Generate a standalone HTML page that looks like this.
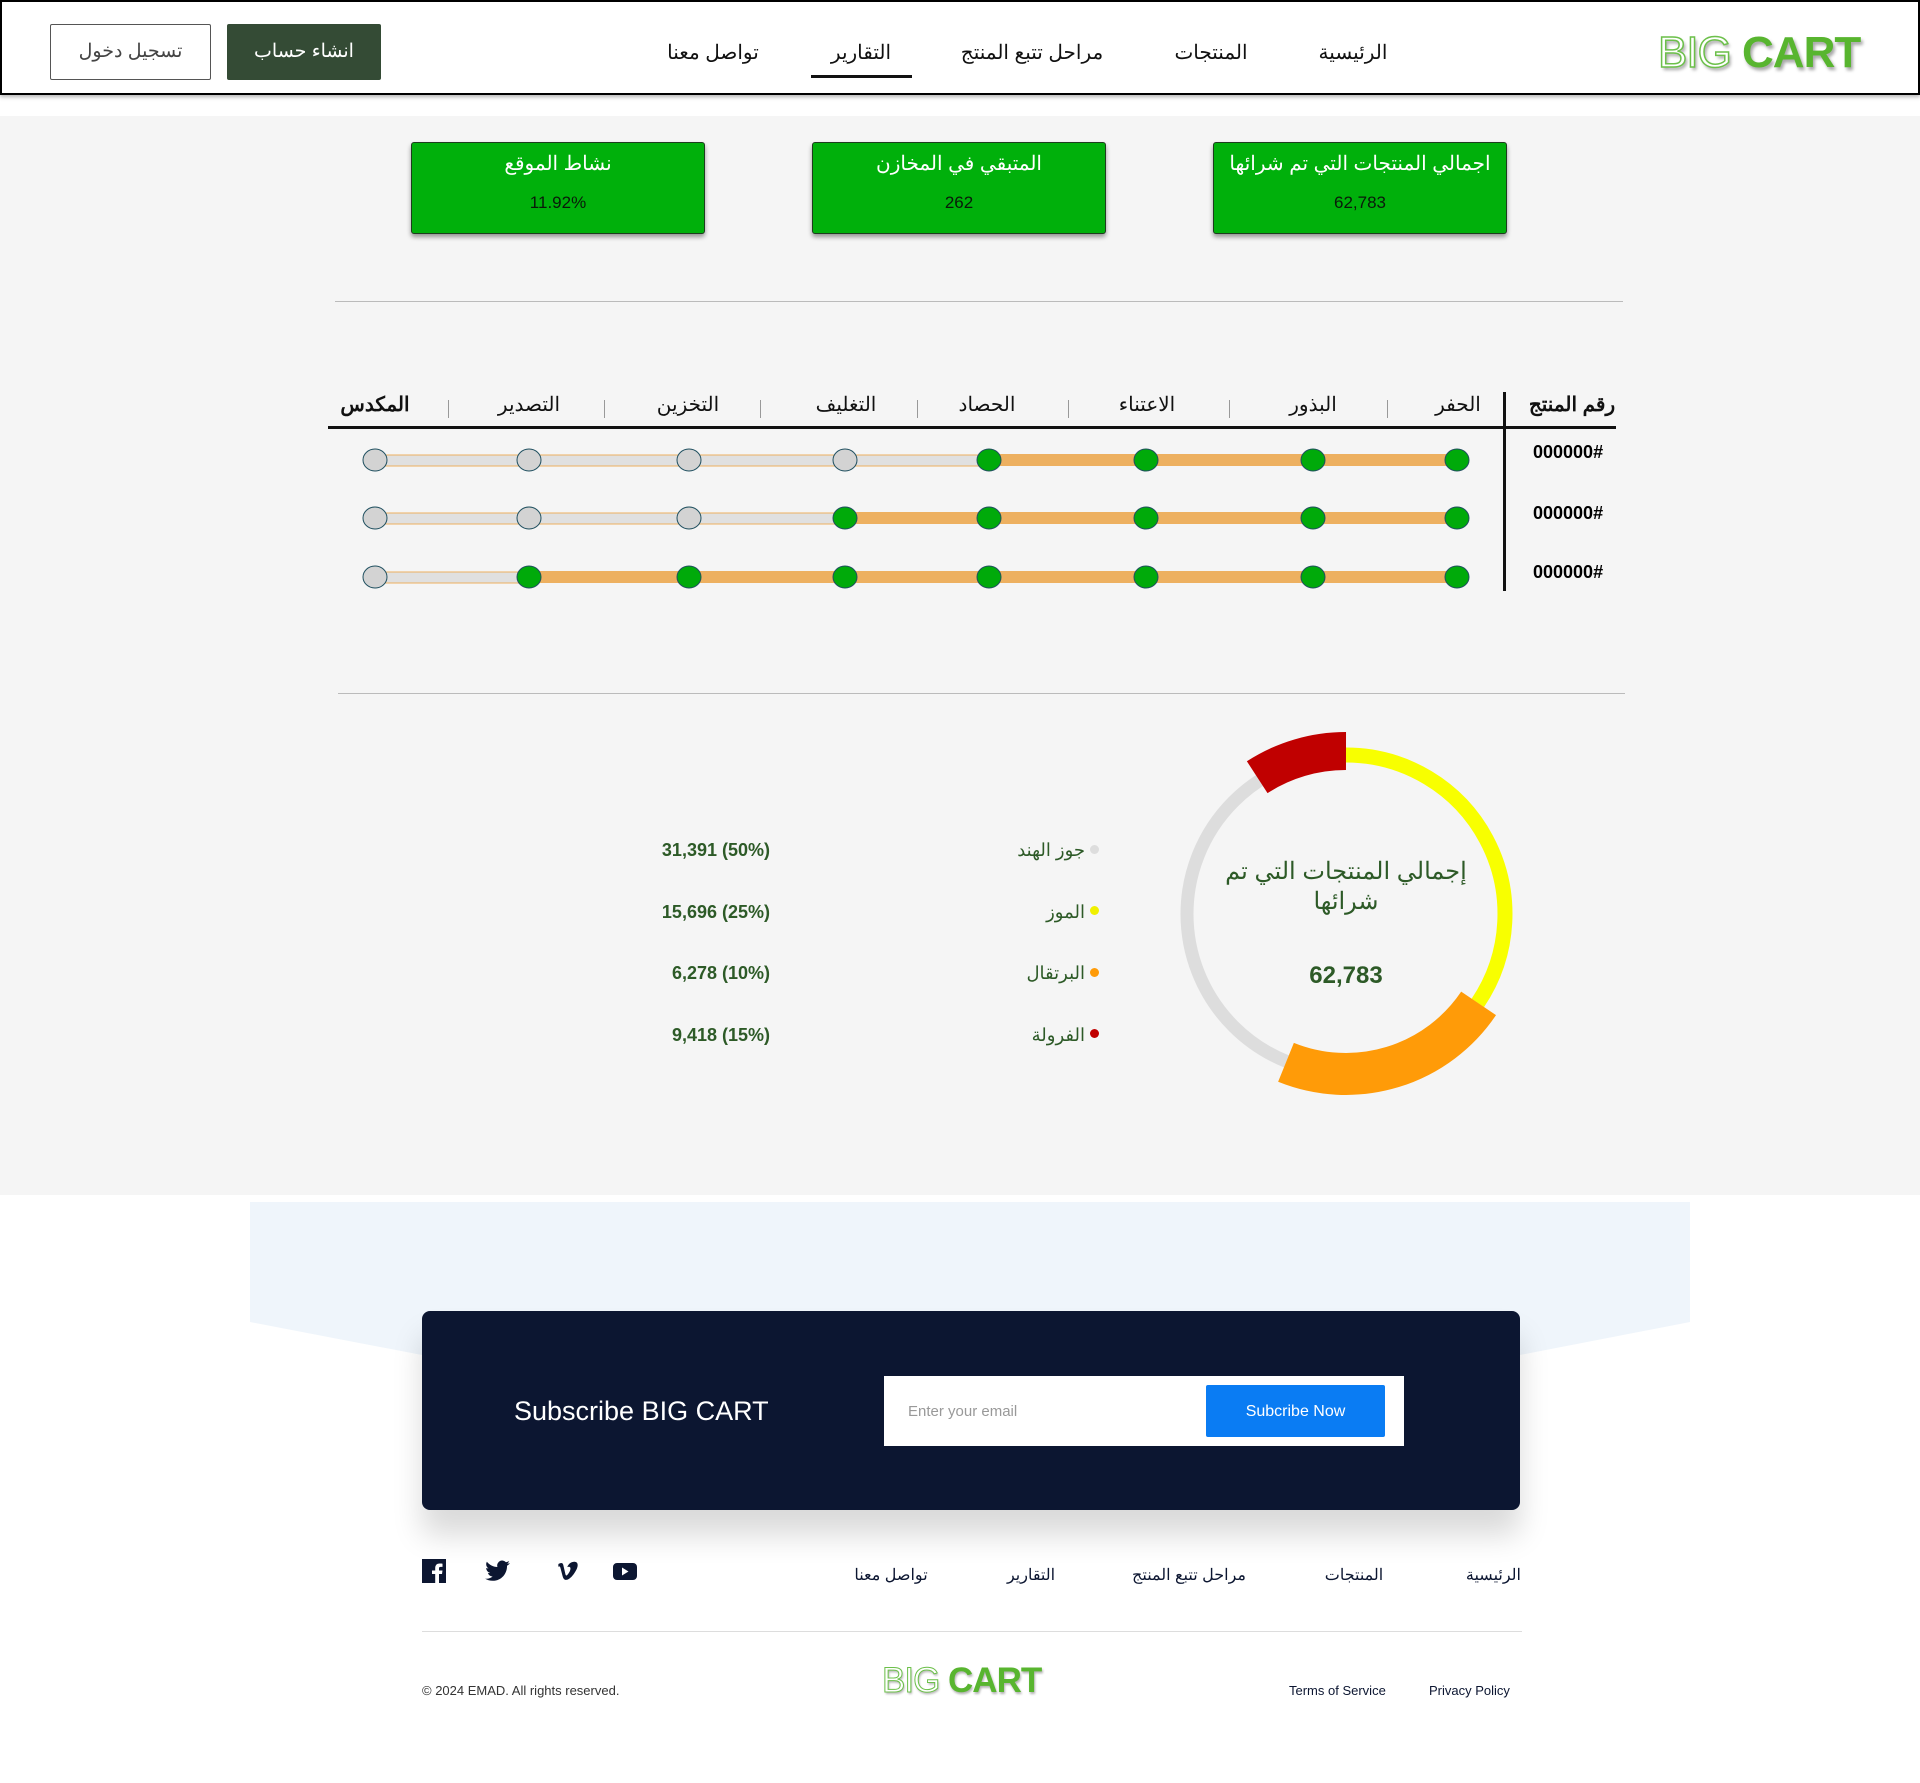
<!DOCTYPE html>
<html><head><meta charset="utf-8"><style>
*{margin:0;padding:0;box-sizing:border-box}
body{width:1920px;height:1783px;position:relative;background:#fff;font-family:"Liberation Sans","Noto Sans CJK SC",sans-serif;overflow:hidden}
.a{position:absolute;white-space:nowrap}
.c{transform:translateX(-50%)}
.nav{font-size:20px;color:#111;top:40px}
.card{position:absolute;top:142px;width:294px;height:92px;background:#00b00b;border:1px solid #1d3d1d;border-radius:3px;box-shadow:0 3px 5px rgba(0,0,0,.4);color:#fff;text-align:center}
.card .t{font-size:20px;margin-top:8px}
.card .v{font-size:17px;margin-top:17px;color:#0a1a0a}
.hd{font-size:20px;color:#111;top:392px;font-weight:bold}
.sep{position:absolute;top:400px;width:1px;height:18px;background:#999}
.lg{font-size:18px;color:#2d5a27}
.vl{font-size:18px;color:#2d5a27;font-weight:bold}
.fl{font-size:16px;color:#0c1631;top:1565px}
</style></head><body>
<div class="a" style="left:0;top:0;width:1920px;height:95px;border:2px solid #000;background:#fff;box-shadow:0 2px 4px rgba(0,0,0,.3)"></div>
<div class="a" style="left:50px;top:24px;width:161px;height:56px;border:1px solid #555;border-radius:2px;text-align:center;line-height:54px;font-size:19px;color:#444">تسجيل دخول</div>
<div class="a" style="left:227px;top:24px;width:154px;height:56px;background:#344b35;border-radius:2px;text-align:center;line-height:56px;font-size:19px;color:#fff">انشاء حساب</div>
<div class="a nav c" style="left:1353px">الرئيسية</div>
<div class="a nav c" style="left:1211px">المنتجات</div>
<div class="a nav c" style="left:1032px">مراحل تتبع المنتج</div>
<div class="a nav c" style="left:861px">التقارير</div>
<div class="a" style="left:811px;top:75px;width:101px;height:3px;background:#111"></div>
<div class="a nav c" style="left:713px">تواصل معنا</div>
<div class="a" style="left:1658px;top:28px;font-size:44px;letter-spacing:-1px;text-shadow:2px 3px 3px rgba(0,0,0,.35)"><span style="color:#fff;-webkit-text-stroke:1.5px #6cc04a">BIG</span> <span style="color:#58b52f;font-weight:bold">CART</span></div>
<div class="a" style="left:0;top:116px;width:1920px;height:1079px;background:#f5f5f5"></div>
<div class="card" style="left:411px"><div class="t">نشاط الموقع</div><div class="v">11.92%</div></div>
<div class="card" style="left:812px"><div class="t">المتبقي في المخازن</div><div class="v">262</div></div>
<div class="card" style="left:1213px"><div class="t">اجمالي المنتجات التي تم شرائها</div><div class="v">62,783</div></div>
<div class="a" style="left:335px;top:301px;width:1288px;height:1px;background:#bbb"></div>
<div class="a hd c" style="left:1572px">رقم المنتج</div>
<div class="a hd c" style="left:1458px;font-weight:normal">الحفر</div>
<div class="a hd c" style="left:1313px;font-weight:normal">البذور</div>
<div class="a hd c" style="left:1147px;font-weight:normal">الاعتناء</div>
<div class="a hd c" style="left:987px;font-weight:normal">الحصاد</div>
<div class="a hd c" style="left:846px;font-weight:normal">التغليف</div>
<div class="a hd c" style="left:688px;font-weight:normal">التخزين</div>
<div class="a hd c" style="left:529px;font-weight:normal">التصدير</div>
<div class="a hd c" style="left:375px">المكدس</div>
<div class="sep" style="left:1387px"></div><div class="sep" style="left:1229px"></div><div class="sep" style="left:1068px"></div><div class="sep" style="left:917px"></div><div class="sep" style="left:760px"></div><div class="sep" style="left:604px"></div><div class="sep" style="left:448px"></div>
<div class="a" style="left:328px;top:426px;width:1288px;height:3px;background:#111"></div>
<div class="a" style="left:1503px;top:392px;width:3px;height:199px;background:#111"></div>
<div class="a" style="left:1533px;top:442px;font-size:18px;font-weight:bold">000000#</div>
<div class="a" style="left:1533px;top:503px;font-size:18px;font-weight:bold">000000#</div>
<div class="a" style="left:1533px;top:562px;font-size:18px;font-weight:bold">000000#</div>
<svg class="a" style="left:0;top:0" width="1920" height="700">
<g stroke="#1f4f5f" stroke-width="1">
<rect x="375" y="455" width="614" height="11" fill="#e0e0e0" stroke="#edb060"/>
<rect x="989" y="454" width="468" height="12" fill="#edb060" stroke="none"/>
<rect x="375" y="513" width="470" height="11" fill="#e0e0e0" stroke="#edb060"/>
<rect x="845" y="512" width="612" height="12" fill="#edb060" stroke="none"/>
<rect x="375" y="572" width="154" height="11" fill="#e0e0e0" stroke="#edb060"/>
<rect x="529" y="571" width="928" height="12" fill="#edb060" stroke="none"/>
<g fill="#00aa0a">
<ellipse cx="1457" cy="460" rx="12" ry="11"/><ellipse cx="1313" cy="460" rx="12" ry="11"/><ellipse cx="1146" cy="460" rx="12" ry="11"/><ellipse cx="989" cy="460" rx="12" ry="11"/>
<ellipse cx="1457" cy="518" rx="12" ry="11"/><ellipse cx="1313" cy="518" rx="12" ry="11"/><ellipse cx="1146" cy="518" rx="12" ry="11"/><ellipse cx="989" cy="518" rx="12" ry="11"/><ellipse cx="845" cy="518" rx="12" ry="11"/>
<ellipse cx="1457" cy="577" rx="12" ry="11"/><ellipse cx="1313" cy="577" rx="12" ry="11"/><ellipse cx="1146" cy="577" rx="12" ry="11"/><ellipse cx="989" cy="577" rx="12" ry="11"/><ellipse cx="845" cy="577" rx="12" ry="11"/><ellipse cx="689" cy="577" rx="12" ry="11"/><ellipse cx="529" cy="577" rx="12" ry="11"/>
</g>
<g fill="#d3d3d3">
<ellipse cx="845" cy="460" rx="12" ry="11"/><ellipse cx="689" cy="460" rx="12" ry="11"/><ellipse cx="529" cy="460" rx="12" ry="11"/><ellipse cx="375" cy="460" rx="12" ry="11"/>
<ellipse cx="689" cy="518" rx="12" ry="11"/><ellipse cx="529" cy="518" rx="12" ry="11"/><ellipse cx="375" cy="518" rx="12" ry="11"/>
<ellipse cx="375" cy="577" rx="12" ry="11"/>
</g>
</g>
</svg>
<div class="a" style="left:338px;top:693px;width:1287px;height:1px;background:#bbb"></div>
<svg class="a" style="left:0;top:0" width="1920" height="1200">
<circle cx="1346" cy="914" r="159" fill="none" stroke="#dddddd" stroke-width="13"/>
<path d="M1346 755 A159 159 0 0 1 1477.8 1002.9" fill="none" stroke="#f8ff00" stroke-width="15"/>
<path d="M1478.6 1003.4 A160 160 0 0 1 1286 1062.3" fill="none" stroke="#ff9b08" stroke-width="42"/>
<path d="M1257.2 777.2 A163 163 0 0 1 1346 751" fill="none" stroke="#c00000" stroke-width="38"/>
</svg>
<div class="a" style="left:1346px;top:857px;transform:translateX(-50%);width:250px;text-align:center;white-space:normal;font-size:24px;line-height:30px;color:#2d5a27">إجمالي المنتجات التي تم شرائها</div>
<div class="a c" style="left:1346px;top:962px;font-size:24px;font-weight:bold;color:#2d5a27">62,783</div>
<div class="a lg" style="right:835px;top:840px">جوز الهند</div>
<div class="a lg" style="right:835px;top:902px">الموز</div>
<div class="a lg" style="right:835px;top:963px">البرتقال</div>
<div class="a lg" style="right:835px;top:1025px">الفرولة</div>
<div class="a" style="left:1090px;top:845px;width:9px;height:9px;border-radius:50%;background:#ddd"></div>
<div class="a" style="left:1090px;top:906px;width:9px;height:9px;border-radius:50%;background:#f0f000"></div>
<div class="a" style="left:1090px;top:968px;width:9px;height:9px;border-radius:50%;background:#ff9b08"></div>
<div class="a" style="left:1090px;top:1029px;width:9px;height:9px;border-radius:50%;background:#c00000"></div>
<div class="a vl" style="right:1150px;top:840px">31,391 (50%)</div>
<div class="a vl" style="right:1150px;top:902px">15,696 (25%)</div>
<div class="a vl" style="right:1150px;top:963px">6,278 (10%)</div>
<div class="a vl" style="right:1150px;top:1025px">9,418 (15%)</div>
<svg class="a" style="left:0;top:1195px" width="1920" height="200"><polygon points="250,7 1690,7 1690,127 1520,160 422,160 250,127" fill="#eff5fb"/></svg>
<div class="a" style="left:422px;top:1311px;width:1098px;height:199px;background:#0c1631;border-radius:8px;box-shadow:0 25px 30px rgba(0,0,0,.15)"></div>
<div class="a" style="left:514px;top:1396px;font-size:27px;color:#fff">Subscribe BIG CART</div>
<div class="a" style="left:884px;top:1376px;width:520px;height:70px;background:#fff"></div>
<div class="a" style="left:908px;top:1403px;font-size:15px;color:#999">Enter your email</div>
<div class="a" style="left:1206px;top:1385px;width:179px;height:52px;background:#0a7cf3;border-radius:2px;color:#fff;font-size:16px;text-align:center;line-height:54px">Subcribe Now</div>
<svg class="a" style="left:422px;top:1559px" width="230" height="26" fill="#0c1631">
<path d="M0 0h24v24h-7v-9h3l.5-3.5H17V9.5c0-1 .4-1.6 1.7-1.6H20.5V4.7c-.4 0-1.5-.2-2.8-.2-2.8 0-4.5 1.6-4.5 4.6v2.4H10V15h3.2v9H0z"/>
<path d="M88 4c-1 .5-2 .7-3 .8 1-.7 1.8-1.6 2.2-2.8-1 .6-2 1-3.2 1.3A5 5 0 0 0 75.4 8c-4.2-.2-8-2.2-10.5-5.3-1.4 2.3-.7 5.3 1.6 6.8-.8 0-1.6-.3-2.3-.6 0 2.5 1.700 4.5 4 5-.7.2-1.5.2-2.3.1.7 2 2.5 3.4 4.7 3.5A10 10 0 0 1 63 19.6c2.2 1.4 4.9 2.2 7.7 2.2 9.3 0 14.6-7.9 14.3-15C86.5 6 87.3 5 88 4z"/>
<path d="M128 5c1.5-1 4-2 4.6.8l2.1 9.5c.3 1 .8 1.8 1.8.6 1.5-1.7 3-4.4 3-6.300 0-1.6-1-2.3-3-1.5 1-3.5 4.3-5.5 7-5.300 3 .2 3.5 3.3 2.2 6.6-2 5-6.700 11.500-10.300 11.500-2.2 0-3-2.2-3.5-4.2l-2-8c-.4-1.5-1-1.7-2-1z" transform="translate(2,0) scale(1.05,1)"/>
<rect x="191" y="4" width="24" height="17" rx="4"/><path d="M200 8.5v8l6.5-4z" fill="#fff"/>
</svg>
<div class="a fl" style="right:399px">الرئيسية</div>
<div class="a fl c" style="left:1354px">المنتجات</div>
<div class="a fl c" style="left:1189px">مراحل تتبع المنتج</div>
<div class="a fl c" style="left:1031px">التقارير</div>
<div class="a fl c" style="left:891px">تواصل معنا</div>
<div class="a" style="left:422px;top:1631px;width:1100px;height:1px;background:#ddd"></div>
<div class="a" style="left:422px;top:1683px;font-size:13px;color:#333">© 2024 EMAD. All rights reserved.</div>
<div class="a" style="left:882px;top:1661px;font-size:35px;letter-spacing:-1px;text-shadow:1px 2px 2px rgba(0,0,0,.3)"><span style="color:#fff;-webkit-text-stroke:1px #6cc04a">BIG</span> <span style="color:#58b52f;font-weight:bold">CART</span></div>
<div class="a" style="left:1289px;top:1683px;font-size:13px;color:#0c1631">Terms of Service</div>
<div class="a" style="left:1429px;top:1683px;font-size:13px;color:#0c1631">Privacy Policy</div>
</body></html>
